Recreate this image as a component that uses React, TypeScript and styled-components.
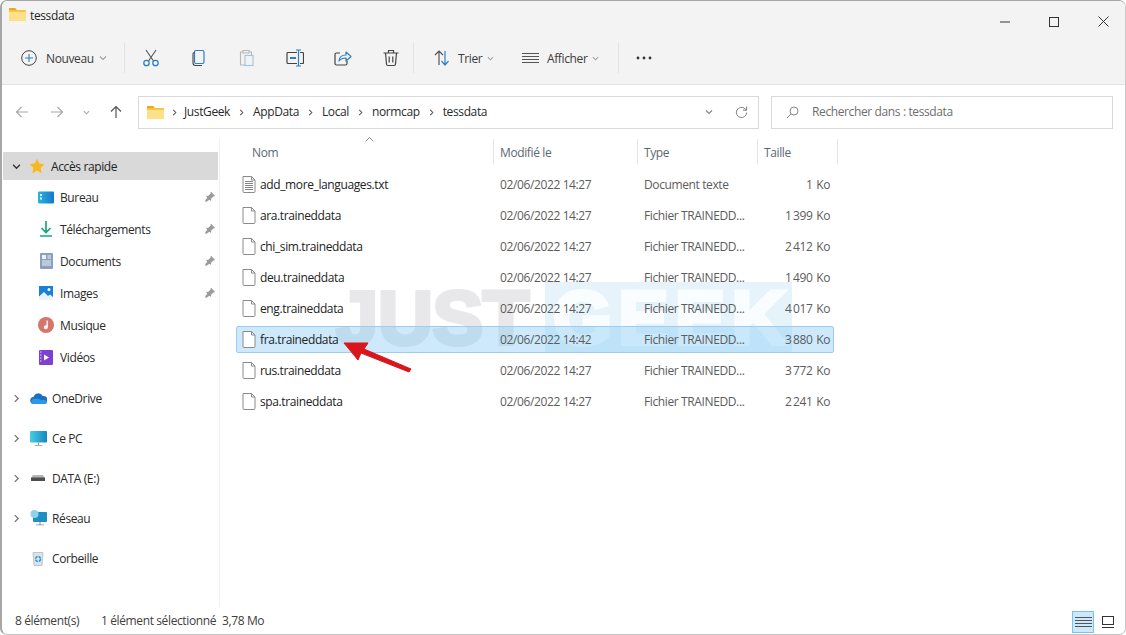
import React from 'react';
import styled, { createGlobalStyle } from 'styled-components';

const Global = createGlobalStyle`
  html, body { margin: 0; padding: 0; background: #fff; }
  body { font-family: "Open Sans", "Noto Sans", "Liberation Sans", sans-serif; font-size: 12px; color: #2b2b2b; overflow: hidden; }
  * { box-sizing: border-box; }
`;

const Win = styled.div`
  position: relative; width: 1126px; height: 635px; display: flex; flex-direction: column;
  border: 1px solid #a6a6a6; border-left-width: 2px; border-bottom-color: #c4c4c4; border-right-color: #c8c8c8;
  border-radius: 7px; overflow: hidden; background: #fff; letter-spacing: -0.38px;
`;
const TitleBar = styled.div`
  height: 31px; background: #f3f3f3; display: flex; align-items: center; padding: 0 0 4px 7px; gap: 4px; font-size: 12px; color: #1f1f1f;
`;
const TitleText = styled.span`flex: 1; margin-top: 1px;`;
const WinBtn = styled.div`width: 46px; height: 31px; display: flex; align-items: center; justify-content: center; align-self: flex-start; margin-top: 5px; margin-right: -1px;`;
const Toolbar = styled.div`
  height: 53px; background: #f3f3f3; border-bottom: 1px solid #e4e4e4; display: flex; align-items: center; padding: 0 0 0 19px; color: #3c3c3c;
`;
const TextBtn = styled.div<{ $w: number }>`
  width: ${p => p.$w}px; display: flex; align-items: center; gap: 0; height: 32px;
`;
const IconBtn = styled.div<{ $faded?: boolean }>`
  width: 48px; height: 32px; display: flex; align-items: center; justify-content: center; opacity: ${p => (p.$faded ? 0.42 : 1)};
`;
const Sep = styled.div<{ $l?: number; $r?: number }>`
  width: 1px; height: 30px; background: #e2e2e2; margin: 0 ${p => p.$r ?? 0}px 0 ${p => p.$l ?? 0}px;
`;
const NavBar = styled.div`
  height: 54px; display: flex; align-items: center; padding: 0 11px 0 10px; background: #fff;
`;
const NavBtn = styled.div<{ $w: number }>`width: ${p => p.$w}px; display: flex; align-items: center; justify-content: center;`;
const Field = styled.div<{ $w: number; $ml: number }>`
  width: ${p => p.$w}px; margin-left: ${p => p.$ml}px; height: 33px; border: 1px solid #d9d9d9; display: flex; align-items: center; background: #fff; position: relative;
`;
const Crumb = styled.span`color: #2a2a2a; margin-top: -1px;`;
const CrumbSep = styled.span`width: 23px; display: flex; justify-content: center;`;
const Spacer = styled.div`flex: 1;`;
const SearchText = styled.span`color: #6e6e6e; margin: -1px 0 0 13px;`;
const Body = styled.div`flex: 1; display: flex; min-height: 0;`;
const Sidebar = styled.div`
  width: 218px; border-right: 1px solid #f0f0f0; padding: 13px 0 0 1px; margin-right: 1px; display: flex; flex-direction: column;
`;
const QuickRow = styled.div`
  width: 215px; height: 28px; background: #d9d9d9; display: flex; align-items: center; color: #222; margin-bottom: 1px; border-radius: 1px;
`;
const SubRow = styled.div`
  height: 32px; display: flex; align-items: center; padding-left: 34px; width: 213px; color: #2a2a2a;
`;
const TopRow = styled.div`
  height: 40px; display: flex; align-items: center; width: 214px; color: #2a2a2a;
`;
const Caret = styled.div`width: 26px; display: flex; justify-content: center; flex: none;`;
const NavIcon = styled.div`width: 18px; height: 18px; display: flex; align-items: center; justify-content: center; margin-right: 5px; flex: none;`;
const Gap = styled.div`height: 5px;`;
const Grow = styled.span`flex: 1;`;
const Content = styled.div`flex: 1; padding-left: 15px;`;
const Header = styled.div`height: 25px; display: flex; color: #5a6875;`;
const HeadCell = styled.div`
  width: ${(p: { $w: number }) => p.$w}px; border-right: 1px solid #e5e5e5; padding: 2px 0 0 6px; display: flex; align-items: center; height: 25px; flex: none;
`;
const NameHead = styled(HeadCell)`padding-left: 16px; position: relative;`;
const SortMark = styled.div`position: absolute; left: 129px; top: -2px; line-height: 0;`;
const List = styled.div`padding-top: 7px; display: flex; flex-direction: column;`;
const Row = styled.div<{ $sel?: boolean }>`
  width: 598px; height: 27px; margin-bottom: 4px; display: flex; align-items: center; color: #5c5c5c; flex: none; position: relative; z-index: 1;
  border: 1px solid ${p => (p.$sel ? '#9ccdf0' : 'transparent')}; background: ${p => (p.$sel ? 'rgba(130, 200, 245, 0.4)' : 'transparent')}; border-radius: 2px;
`;
const NameCell = styled.div`width: 257px; padding-left: 5px; display: flex; align-items: center; gap: 4px; color: #222;`;
const DateCell = styled.div`width: 144px; padding-left: 6px;`;
const TypeCell = styled.div`width: 120px; padding-left: 6px;`;
const SizeCell = styled.div`width: 72px; text-align: right; word-spacing: 1px;`;
const Watermark = styled.div`
  position: absolute; left: 332px; top: 281px; display: flex; align-items: center; pointer-events: none; z-index: 0;
  font-family: "Liberation Sans", Arial, sans-serif; font-weight: 700; font-size: 76px; line-height: 71px;
`;
const Just = styled.span`color: #e8e8ea; width: 211px; padding-left: 2px; -webkit-text-stroke: 4px #e8e8ea;`;
const Geek = styled.span`
  color: #fafdff; background: #e6f3fb; width: 247px; height: 71px; display: block; padding-left: 8px; letter-spacing: 6px; -webkit-text-stroke: 4px #fafdff;
`;
const Arrow = styled.svg`position: absolute; left: 335px; top: 335px; pointer-events: none; z-index: 2;`;
const Status = styled.div`
  height: 27px; display: flex; align-items: center; padding-left: 13px; color: #3e3e3e; position: relative; flex: none;
`;
const StatusA = styled.span`width: 86px;`;
const StatusB = styled.span`width: 121px;`;
const ViewBtns = styled.div`position: absolute; right: 6px; bottom: 1px; display: flex; align-items: center; gap: 3px;`;
const ViewBtn = styled.div<{ $on?: boolean }>`
  width: 22px; height: 22px; display: flex; align-items: center; justify-content: center;
  background: ${p => (p.$on ? '#cde8fb' : 'transparent')}; border: 1px solid ${p => (p.$on ? '#7cc0ec' : 'transparent')};
`;
const Label = styled.span<{ $ml: number }>`margin-left: ${p => p.$ml}px;`;
const ChevWrap = styled.span`margin-left: 5px; display: flex;`;
const FolderWrap = styled.span`margin-left: 8px; display: flex;`;
const FirstSep = styled(CrumbSep)`width: 20px;`;
const PlusIcon = styled.svg`margin-right: 9px;`;
const Refresh = styled.svg`margin: 0 10px 0 22px;`;
const SearchIcon = styled.svg`margin-left: 14px;`;
const StarIcon = styled(NavIcon)`margin-left: -1px;`;

const Folder = () => (
  <svg width="17" height="15" viewBox="0 0 17 15">
    <path d="M0 2.2C0 1.5.5 1 1.2 1H6l2 2h8c.6 0 1 .4 1 1v9c0 .6-.4 1-1 1H1c-.6 0-1-.4-1-1z" fill="#f5c63f" />
    <path d="M0 5h17v8c0 .6-.4 1-1 1H1c-.6 0-1-.4-1-1z" fill="#fde08a" />
    <path d="M0 2.2C0 1.5.5 1 1.200 1H6l1.500 2H0z" fill="#e8a71c" />
  </svg>
);
const Chev = ({ d = 'down', c = '#8a8a8a', s = 8 }: { d?: 'down' | 'right'; c?: string; s?: number }) => (
  <svg width={s} height={s} viewBox="0 0 8 8" fill="none" stroke={c} strokeWidth="1.2">
    {d === 'down' ? <path d="M1 2.5l3 3 3-3" /> : <path d="M2.5 1l3 3-3 3" />}
  </svg>
);
const Cut = () => (
  <svg width="18" height="18" viewBox="0 0 18 18" fill="none">
    <path d="M4 1l7.5 11M14 1L6.5 12" stroke="#555" strokeWidth="1.1" />
    <circle cx="4.5" cy="14" r="2.7" stroke="#2f7fc4" strokeWidth="1.3" />
    <circle cx="13.5" cy="14" r="2.7" stroke="#2f7fc4" strokeWidth="1.3" />
  </svg>
);
const CopyI = () => (
  <svg width="18" height="18" viewBox="0 0 18 18" fill="none">
    <rect x="4.5" y="1.5" width="9.5" height="13" rx="1.5" stroke="#2f7fc4" strokeWidth="1.2" />
    <path d="M4.5 3.5c-1 0-1.5.6-1.5 1.5v9c0 1.6 1 2.5 2.5 2.5H12" stroke="#444" strokeWidth="1.1" />
  </svg>
);
const Paste = () => (
  <svg width="18" height="18" viewBox="0 0 18 18" fill="none">
    <path d="M5 3H2.5v13H7" stroke="#666" strokeWidth="1.1" />
    <path d="M5 1.5h6V4H5zM11 3h2.5v3" stroke="#666" strokeWidth="1.1" />
    <rect x="7" y="6.5" width="8" height="10" stroke="#2f7fc4" strokeWidth="1.1" />
  </svg>
);
const Rename = () => (
  <svg width="18" height="18" viewBox="0 0 18 18" fill="none">
    <path d="M11 3.5H2a1 1 0 00-1 1v9a1 1 0 001 1h9M14 3.5h2.5a1 1 0 011 1v9a1 1 0 01-1 1H14" stroke="#444" strokeWidth="1.2" />
    <path d="M10 1h5M10 17h5M12.5 1v16" stroke="#2f7fc4" strokeWidth="1.2" />
    <path d="M4 9h6" stroke="#2f7fc4" strokeWidth="2" />
  </svg>
);
const Share = () => (
  <svg width="18" height="18" viewBox="0 0 18 18" fill="none">
    <path d="M6 4H2.5A1.5 1.5 0 001 5.5v9A1.5 1.5 0 002.5 16h9a1.5 1.5 0 001.5-1.5V12" stroke="#444" strokeWidth="1.2" />
    <path d="M5 12c.3-4 3-6 7-6V3l5 4.5L12 12V9c-3 0-5.500 1-7 3z" stroke="#2f7fc4" strokeWidth="1.2" strokeLinejoin="round" />
  </svg>
);
const Trash = () => (
  <svg width="18" height="18" viewBox="0 0 18 18" fill="none" stroke="#444" strokeWidth="1.2">
    <path d="M1.500 4h15M6.500 4V1.500h5V4M3.500 4l1 11a1.500 1.500 0 001.500 1.500h6a1.500 1.500 0 001.500-1.500l1-11M7.200 7.500v6M10.800 7.500v6" />
  </svg>
);
const Sort = () => (
  <svg width="18" height="18" viewBox="0 0 18 18" fill="none" strokeWidth="1.2">
    <path d="M6 16V2M2 6l4-4 4 4" stroke="#555" />
    <path d="M12 2v14M8.500 12l3.500 4 3.500-4" stroke="#2f7fc4" />
  </svg>
);
const Lines = () => (
  <svg width="17" height="12" viewBox="0 0 17 12" stroke="#555" strokeWidth="1">
    <path d="M0 1.500h17M0 4.500h17M0 7.500h17M0 10.500h17" />
  </svg>
);
const Page = ({ text }: { text?: boolean }) => (
  <svg width="14" height="17" viewBox="0 0 14 17" fill="none" stroke="#8a8a8a" strokeWidth="1">
    <path d="M1 .5h8.500L13 4v11.500a1 1 0 01-1 1H2a1 1 0 01-1-1v-15z" fill="#fff" />
    <path d="M9.500.5V4H13" />
    {text && <path d="M3 5.500h8M3 7.500h8M3 9.500h8M3 11.500h8M3 13.500h8" stroke="#777" strokeWidth=".9" />}
  </svg>
);
const Pin = () => (
  <svg width="12" height="12" viewBox="0 0 12 12" fill="#9a9a9a">
    <path d="M7 .8l4.200 4.200-1 .6-.7-.3L7.200 7.600 7 10 5.500 8.800 2 11l-1-.9L3.200 6.500 2 5l2.400-.2 2.300-2.300-.3-.7z" />
  </svg>
);
const Arr = ({ dir, c }: { dir: 'l' | 'r' | 'u'; c: string }) => (
  <svg width="14" height="14" viewBox="0 0 14 14" fill="none" stroke={c} strokeWidth="1.2">
    {dir === 'l' && <path d="M13 7H1.500M6.500 2l-5 5 5 5" />}
    {dir === 'r' && <path d="M1 7h11.500M7.500 2l5 5-5 5" />}
    {dir === 'u' && <path d="M7 13V1.500M2 6.500l5-5 5 5" />}
  </svg>
);

const Icons: Record<string, React.ReactNode> = {
  bureau: (
    <svg width="16" height="13" viewBox="0 0 16 13">
      <defs><linearGradient id="bu" x1="0" x2="1"><stop offset="0" stopColor="#27b5e4" /><stop offset="1" stopColor="#1976c8" /></linearGradient></defs>
      <rect width="16" height="12" y=".5" rx="1" fill="url(#bu)" />
      <rect x="2" y="3" width="2" height="2" fill="#e8f8ff" /><rect x="2" y="6.500" width="2" height="2" fill="#e8f8ff" />
    </svg>
  ),
  dl: (
    <svg width="14" height="16" viewBox="0 0 14 16" fill="none" stroke="#17a67e" strokeWidth="1.700">
      <path d="M7 0v11M2.500 7l4.500 4.500L11.500 7" /><path d="M1 15h12" />
    </svg>
  ),
  docs: (
    <svg width="13" height="16" viewBox="0 0 13 16">
      <rect width="13" height="16" rx="1" fill="#8ba0bd" />
      <rect x="2" y="2" width="4" height="4" fill="#eef2f7" /><path d="M7.500 3h3.500M7.500 5h3.500M2 8h9M2 10h9M2 12h9" stroke="#eef2f7" strokeWidth="1" />
    </svg>
  ),
  img: (
    <svg width="14" height="14" viewBox="0 0 14 14">
      <rect width="14" height="14" fill="#1a7fd6" />
      <circle cx="10" cy="3.500" r="1.500" fill="#fff" />
      <path d="M0 14V10.500L5 6l4 4 2-1.500L14 11v3z" fill="#e8f4fc" />
    </svg>
  ),
  music: (
    <svg width="16" height="16" viewBox="0 0 16 16">
      <circle cx="8" cy="8" r="8" fill="#d7746c" />
      <path d="M8.500 3.500h1.300v6.800a2 2 0 11-1.300-1.900z" fill="#fff" />
    </svg>
  ),
  video: (
    <svg width="14" height="15" viewBox="0 0 14 15">
      <rect width="14" height="15" rx="1" fill="#7f3fd1" />
      <path d="M5 4.500l5 3-5 3z" fill="#fff" />
      <path d="M1 2h1.500M1 5h1.500M1 8h1.500M1 11h1.500" stroke="#e3d3fa" strokeWidth="1.200" />
    </svg>
  ),
  star: (
    <svg width="16" height="16" viewBox="0 0 24 24">
      <path d="M12 1l3.400 7.300 7.800 1-5.700 5.500 1.500 8L12 18.900l-7 3.900 1.500-8L.8 9.300l7.800-1z" fill="#f6b81c" />
    </svg>
  ),
  cloud: (
    <svg width="17" height="11" viewBox="0 0 17 11">
      <path d="M4 11a3.500 3.500 0 01-.5-7A5 5 0 0112.700 3 4 4 0 0114 11z" fill="#1a70c4" />
      <path d="M4 11a2.500 2.500 0 01-.5-5c4-1.500 7 0 8 1.500 2-1 4.500-.5 5.500 1.500 0 1.500-1.500 2-3 2z" fill="#2c9ae2" />
    </svg>
  ),
  pc: (
    <svg width="17" height="15" viewBox="0 0 17 15">
      <defs><linearGradient id="pc" x1="0" x2="1"><stop offset="0" stopColor="#45cfe2" /><stop offset="1" stopColor="#1786c2" /></linearGradient></defs>
      <rect width="17" height="11.500" rx="1" fill="url(#pc)" />
      <path d="M8 11.500h1V14H8zM4.500 14h8v.8h-8z" fill="#8a9aa5" />
    </svg>
  ),
  drive: (
    <svg width="14" height="6" viewBox="0 0 14 6">
      <path d="M2 0h10l2 3H0z" fill="#b5b5b5" /><rect y="2.500" width="14" height="3.500" rx=".5" fill="#4e4e4e" />
    </svg>
  ),
  net: (
    <svg width="17" height="16" viewBox="0 0 17 16">
      <rect x="3" y="2" width="14" height="10" rx="1" fill="#1d8fc2" />
      <circle cx="4.500" cy="4" r="4" fill="#8fd2ee" />
      <path d="M9.500 12h1v2.500h-1zM6 14.500h8v.8H6z" fill="#7a8a95" />
    </svg>
  ),
  bin: (
    <svg width="12" height="15" viewBox="0 0 12 15">
      <path d="M1 1.500h10l-1 13H2z" fill="#d8e3ea" stroke="#a7b4bd" strokeWidth=".7" />
      <circle cx="6" cy="8" r="2.500" fill="none" stroke="#2a8fd6" strokeWidth="1.500" strokeDasharray="3 1" />
    </svg>
  ),
};

const quick = [
  { k: 'bureau', t: 'Bureau', pin: true },
  { k: 'dl', t: 'Téléchargements', pin: true },
  { k: 'docs', t: 'Documents', pin: true },
  { k: 'img', t: 'Images', pin: true },
  { k: 'music', t: 'Musique' },
  { k: 'video', t: 'Vidéos' },
];
const tops = [
  { k: 'cloud', t: 'OneDrive', c: true },
  { k: 'pc', t: 'Ce PC', c: true },
  { k: 'drive', t: 'DATA (E:)', c: true },
  { k: 'net', t: 'Réseau', c: true },
  { k: 'bin', t: 'Corbeille' },
];
const F = 'Fichier TRAINEDD...';
const files = [
  { n: 'add_more_languages.txt', d: '02/06/2022 14:27', ty: 'Document texte', s: '1 Ko', txt: true },
  { n: 'ara.traineddata', d: '02/06/2022 14:27', ty: F, s: '1\u2009399 Ko' },
  { n: 'chi_sim.traineddata', d: '02/06/2022 14:27', ty: F, s: '2\u2009412 Ko' },
  { n: 'deu.traineddata', d: '02/06/2022 14:27', ty: F, s: '1\u2009490 Ko' },
  { n: 'eng.traineddata', d: '02/06/2022 14:27', ty: F, s: '4\u2009017 Ko' },
  { n: 'fra.traineddata', d: '02/06/2022 14:42', ty: F, s: '3\u2009880 Ko', sel: true },
  { n: 'rus.traineddata', d: '02/06/2022 14:27', ty: F, s: '3\u2009772 Ko' },
  { n: 'spa.traineddata', d: '02/06/2022 14:27', ty: F, s: '2\u2009241 Ko' },
];

const Crumbs = ['JustGeek', 'AppData', 'Local', 'normcap'];

export default function App() {
  return (
    <>
      <Global />
      <Win>
        <TitleBar>
          <Folder />
          <TitleText>tessdata</TitleText>
          <WinBtn><svg width="10" height="2"><path d="M0 1h10" stroke="#333" /></svg></WinBtn>
          <WinBtn><svg width="10" height="10"><rect x=".5" y=".5" width="9" height="9" fill="none" stroke="#333" /></svg></WinBtn>
          <WinBtn><svg width="11" height="11"><path d="M.5.5l10 10M10.500.5l-10 10" stroke="#333" /></svg></WinBtn>
        </TitleBar>
        <Toolbar>
          <TextBtn $w={103}>
            <PlusIcon width="16" height="16" viewBox="0 0 16 16" fill="none">
              <circle cx="8" cy="8" r="7.300" stroke="#444" strokeWidth="1" />
              <path d="M8 4v8M4 8h8" stroke="#2f7fc4" strokeWidth="1.100" />
            </PlusIcon>
            <span>Nouveau</span>
            <ChevWrap><Chev c="#a0a0a0" /></ChevWrap>
          </TextBtn>
          <Sep $r={2} />
          <IconBtn><Cut /></IconBtn>
          <IconBtn><CopyI /></IconBtn>
          <IconBtn $faded><Paste /></IconBtn>
          <IconBtn><Rename /></IconBtn>
          <IconBtn><Share /></IconBtn>
          <IconBtn><Trash /></IconBtn>
          <Sep $l={-2} $r={19} />
          <TextBtn $w={89}>
            <Sort /><Label $ml={7}>Trier</Label>
            <ChevWrap><Chev c="#a0a0a0" s={7} /></ChevWrap>
          </TextBtn>
          <TextBtn $w={96}>
            <Lines /><Label $ml={8}>Afficher</Label>
            <ChevWrap><Chev c="#a0a0a0" s={7} /></ChevWrap>
          </TextBtn>
          <Sep $r={17} />
          <svg width="16" height="4" viewBox="0 0 16 4" fill="#333"><circle cx="2" cy="2" r="1.400" /><circle cx="8" cy="2" r="1.400" /><circle cx="14" cy="2" r="1.400" /></svg>
        </Toolbar>
        <NavBar>
          <NavBtn $w={19}><Arr dir="l" c="#a8a8a8" /></NavBtn>
          <NavBtn $w={51}><Arr dir="r" c="#a8a8a8" /></NavBtn>
          <NavBtn $w={9}><Chev c="#a8a8a8" s={7} /></NavBtn>
          <NavBtn $w={49}><Arr dir="u" c="#555" /></NavBtn>
          <Field $w={621} $ml={-2}>
            <FolderWrap><Folder /></FolderWrap>
            <FirstSep><Chev d="right" c="#555" s={7} /></FirstSep>
            {Crumbs.map(c => (
              <React.Fragment key={c}>
                <Crumb>{c}</Crumb>
                <CrumbSep><Chev d="right" c="#555" s={7} /></CrumbSep>
              </React.Fragment>
            ))}
            <Crumb>tessdata</Crumb>
            <Spacer />
            <Chev c="#888" />
            <Refresh width="13" height="13" viewBox="0 0 14 14" fill="none" stroke="#777" strokeWidth="1">
              <path d="M12.500 7a5.500 5.500 0 11-1.800-4.100L12.500 4.500M12.500.5v4h-4" />
            </Refresh>
          </Field>
          <Field $w={342} $ml={12}>
            <SearchIcon width="13" height="13" viewBox="0 0 13 13" fill="none" stroke="#888" strokeWidth="1">
              <circle cx="8" cy="5" r="4" /><path d="M5 8l-4 4" />
            </SearchIcon>
            <SearchText>Rechercher dans : tessdata</SearchText>
          </Field>
        </NavBar>
        <Body>
          <Sidebar>
            <QuickRow>
              <Caret><Chev c="#333" s={9} /></Caret>
              <StarIcon>{Icons.star}</StarIcon>
              <span>Accès rapide</span>
            </QuickRow>
            {quick.map(q => (
              <SubRow key={q.t}>
                <NavIcon>{Icons[q.k]}</NavIcon>
                <Grow>{q.t}</Grow>
                {q.pin && <Pin />}
              </SubRow>
            ))}
            <Gap />
            {tops.map(q => (
              <TopRow key={q.t}>
                <Caret>{q.c && <Chev d="right" c="#777" s={9} />}</Caret>
                <NavIcon>{Icons[q.k]}</NavIcon>
                <span>{q.t}</span>
              </TopRow>
            ))}
          </Sidebar>
          <Content>
            <Header>
              <NameHead $w={258}>
                Nom
                <SortMark><svg width="9" height="5" viewBox="0 0 9 5" fill="none" stroke="#888"><path d="M.5 4.500l4-4 4 4" /></svg></SortMark>
              </NameHead>
              <HeadCell $w={144}>Modifié le</HeadCell>
              <HeadCell $w={120}>Type</HeadCell>
              <HeadCell $w={80}>Taille</HeadCell>
            </Header>
            <List>
              {files.map(f => (
                <Row key={f.n} $sel={f.sel}>
                  <NameCell><Page text={f.txt} /><span>{f.n}</span></NameCell>
                  <DateCell>{f.d}</DateCell>
                  <TypeCell>{f.ty}</TypeCell>
                  <SizeCell>{f.s}</SizeCell>
                </Row>
              ))}
            </List>
          </Content>
        </Body>
        <Status>
          <StatusA>8 élément(s)</StatusA>
          <StatusB>1 élément sélectionné</StatusB>
          <span>3,78 Mo</span>
          <ViewBtns>
            <ViewBtn $on><Lines /></ViewBtn>
            <ViewBtn>
              <svg width="14" height="14" viewBox="0 0 14 14" fill="none" stroke="#333"><rect x="1.500" y="1.500" width="11" height="8" /><path d="M1 12.500h12" /></svg>
            </ViewBtn>
          </ViewBtns>
        </Status>
        <Watermark>
          <Just>JUST</Just>
          <Geek>GEEK</Geek>
        </Watermark>
        <Arrow width="80" height="42" viewBox="0 0 80 42">
          <path d="M7 7L31 7 27 13 74 33 72 36 24 17 21 24z" fill="#d9161c" stroke="#d9161c" strokeWidth="1" strokeLinejoin="round" />
        </Arrow>
      </Win>
    </>
  );
}
